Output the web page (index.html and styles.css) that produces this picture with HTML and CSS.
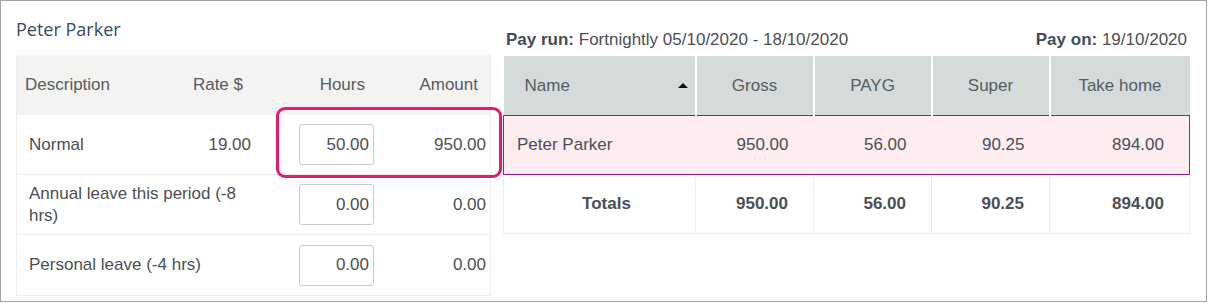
FILE: index.html
```html
<!DOCTYPE html>
<html lang="en">
<head>
    <meta charset="UTF-8">
    <meta name="viewport" content="width=device-width, initial-scale=1.0">
    <title>Pay run - Peter Parker</title>
    <link rel="stylesheet" href="styles.css">
</head>
<body>
    <div class="frame">
        <section class="employee">
            <h2 class="employee-name">Peter Parker</h2>
            <div class="pay-lines">
                <div class="cell head">Description</div>
                <div class="cell head num">Rate $</div>
                <div class="cell head num hours-head">Hours</div>
                <div class="cell head num amount-head">Amount</div>

                <div class="cell">Normal</div>
                <div class="cell num">19.00</div>
                <div class="cell num"><input class="hours" type="text" value="50.00"></div>
                <div class="cell num">950.00</div>

                <div class="cell wide">Annual leave this period (-8 hrs)</div>
                <div class="cell num"><input class="hours" type="text" value="0.00"></div>
                <div class="cell num">0.00</div>

                <div class="cell wide last">Personal leave (-4 hrs)</div>
                <div class="cell num last"><input class="hours" type="text" value="0.00"></div>
                <div class="cell num last">0.00</div>

                <div class="highlight"></div>
            </div>
        </section>

        <section class="summary">
            <div class="pay-meta">
                <span><b>Pay run:</b> Fortnightly 05/10/2020 - 18/10/2020</span>
                <span><b>Pay on:</b> 19/10/2020</span>
            </div>
            <table class="pay-table">
                <colgroup>
                    <col class="col-name">
                    <col class="col-amt">
                    <col class="col-amt">
                    <col class="col-amt">
                    <col class="col-take">
                </colgroup>
                <thead>
                    <tr>
                        <th class="name-col">Name <span class="sort"></span></th>
                        <th>Gross</th>
                        <th>PAYG</th>
                        <th>Super</th>
                        <th>Take home</th>
                    </tr>
                </thead>
                <tbody>
                    <tr class="selected">
                        <td class="name-col">Peter Parker</td>
                        <td>950.00</td>
                        <td>56.00</td>
                        <td>90.25</td>
                        <td>894.00</td>
                    </tr>
                    <tr class="totals">
                        <td class="name-col">Totals</td>
                        <td>950.00</td>
                        <td>56.00</td>
                        <td>90.25</td>
                        <td>894.00</td>
                    </tr>
                </tbody>
            </table>
        </section>
    </div>
</body>
</html>
```

FILE: styles.css
```css
body {
    margin: 0;
    font-family: "Liberation Sans", Arial, sans-serif;
    font-size: 17px;
    color: #4b4f55;
    background: #fff;
}
.frame {
    box-sizing: border-box;
    width: 1207px;
    height: 302px;
    border: 1px solid #a3a3a3;
    display: flex;
    gap: 12px;
    padding-left: 15px;
}

/* left: employee pay lines */
.employee {
    width: 475px;
}
.employee-name {
    margin: 0;
    height: 54px;
    padding-top: 16px;
    box-sizing: border-box;
    font-family: "Open Sans", sans-serif;
    font-weight: 400;
    font-size: 18px;
    color: #3a4b5e;
}
.pay-lines {
    position: relative;
    display: grid;
    grid-template-columns: 173px 65px 123px 112px;
    grid-auto-rows: 60px;
    border: 1px solid #eee;
    border-top: 0;
}
.cell {
    display: flex;
    align-items: center;
    box-sizing: border-box;
    padding: 0 4px 0 12px;
    border-bottom: 1px solid #eee;
    line-height: 22px;
    white-space: nowrap;
}
.cell.last {
    border-bottom: 0;
}
.cell.wide {
    grid-column: span 2;
    white-space: normal;
}
.cell.num {
    justify-content: flex-end;
}
.head {
    background: #f3f3f1;
    border-bottom: 0;
    padding-left: 8px;
    color: #555b62;
}
.head.num {
    padding-right: 12px;
}
.head.hours-head {
    padding-right: 13px;
}
.hours {
    box-sizing: border-box;
    width: 75px;
    height: 41px;
    border: 1px solid #ccc;
    border-radius: 3px;
    padding: 0 4px;
    text-align: right;
    font-family: inherit;
    font-size: 17px;
    color: #4b4f55;
}
.highlight {
    position: absolute;
    left: 259px;
    top: 52px;
    width: 226px;
    height: 71px;
    box-sizing: border-box;
    border: 3px solid #e8176f;
    border-radius: 9px;
}

/* right: pay run summary */
.summary {
    width: 686px;
}
.pay-meta {
    display: flex;
    justify-content: space-between;
    height: 55px;
    padding: 29px 2px 0 3px;
    box-sizing: border-box;
}
.pay-meta b {
    color: #454c55;
}
.pay-table {
    width: 686px;
    border-collapse: collapse;
    table-layout: fixed;
}
.col-name {
    width: 192px;
}
.col-amt {
    width: 118px;
}
.col-take {
    width: 140px;
}
.pay-table th,
.pay-table td {
    padding: 0 25px 0 0;
    text-align: right;
}
.pay-table th {
    height: 59px;
    background: #d5dbdb;
    font-weight: normal;
    text-align: center;
    padding: 0;
    color: #555b62;
    border-left: 2px solid #fff;
}
.pay-table th:first-child {
    border-left: 0;
}
.pay-table th.name-col {
    text-align: left;
    padding-left: 21px;
    position: relative;
}
.sort {
    position: absolute;
    right: 7px;
    top: 27px;
    width: 0;
    height: 0;
    border-left: 5px solid transparent;
    border-right: 5px solid transparent;
    border-bottom: 5px solid #111;
}
.selected td {
    height: 58px;
    background: #fdedf1;
    border-top: 1px solid #b3177b;
    border-bottom: 1px solid #b3177b;
}
.selected td:first-child {
    border-left: 1px solid #b3177b;
}
.selected td:last-child {
    border-right: 1px solid #b3177b;
}
.selected td.name-col {
    text-align: left;
    padding-left: 13px;
}
.totals td {
    height: 58px;
    font-weight: bold;
    border: 1px solid #eee;
    border-top: 0;
}
.totals td.name-col {
    text-align: center;
    padding: 0 0 0 14px;
}
```
